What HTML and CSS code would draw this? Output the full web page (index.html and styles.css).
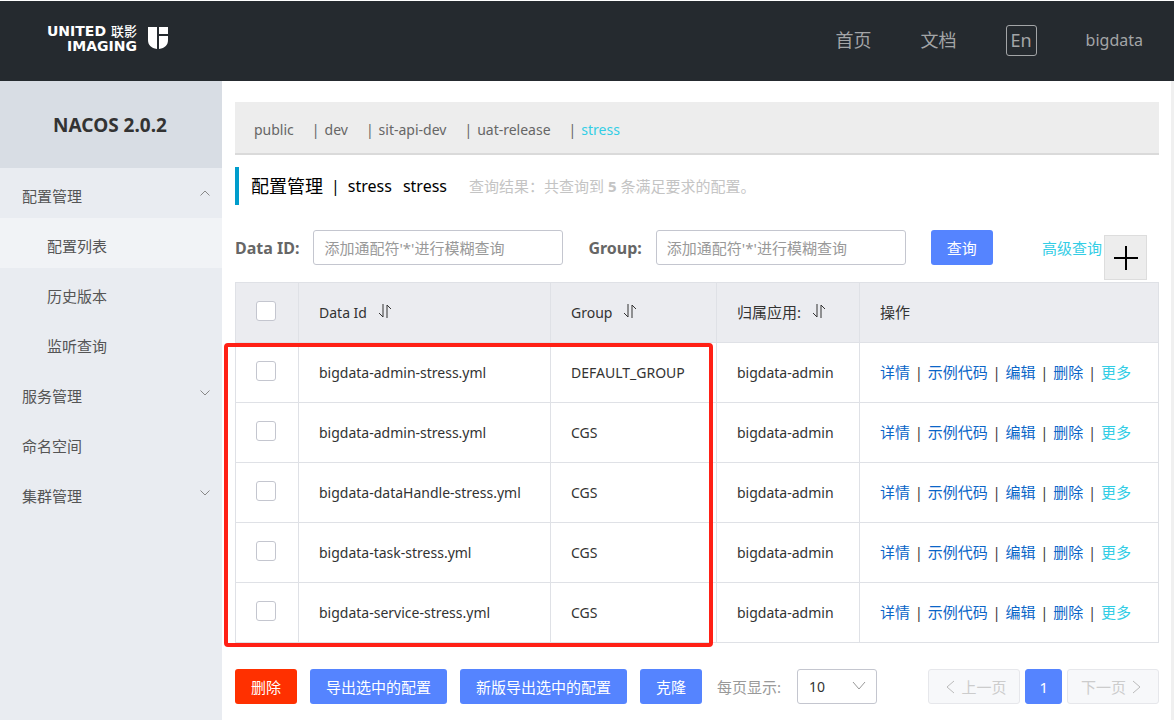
FILE: index.html
```html
<!DOCTYPE html>
<html lang="zh-CN">
<head>
<meta charset="utf-8">
<title>NACOS</title>
<link rel="stylesheet" href="styles.css">
</head>
<body>
<header class="topbar">
  <a class="logo" href="#">
    <span class="logo-text">
      <span class="logo-line">UNITED <span class="logo-cn">联影</span></span>
      <span class="logo-line">IMAGING</span>
    </span>
    <svg class="logo-mark" viewBox="0 0 20 22" aria-hidden="true"><path d="M0 0h9v22C3 21 0 18 0 13zM11 0h9v7h-9zM11 9h9v4c0 5-3 8-9 9z" fill="#fff"/></svg>
  </a>
  <nav class="topnav">
    <a href="#">首页</a>
    <a href="#">文档</a>
    <button class="lang" type="button">En</button>
    <a class="user" href="#">bigdata</a>
  </nav>
</header>
<div class="layout">
  <aside class="sidebar">
    <h1 class="product">NACOS 2.0.2</h1>
    <nav class="menu">
      <a class="item" href="#">配置管理<svg class="chev" viewBox="0 0 10 6"><path d="M0.5 5.5 5 1l4.500 4.500"/></svg></a>
      <a class="item sub active" href="#">配置列表</a>
      <a class="item sub" href="#">历史版本</a>
      <a class="item sub" href="#">监听查询</a>
      <a class="item" href="#">服务管理<svg class="chev" viewBox="0 0 10 6"><path d="M0.5 0.500 5 5l4.500-4.500"/></svg></a>
      <a class="item" href="#">命名空间</a>
      <a class="item" href="#">集群管理<svg class="chev" viewBox="0 0 10 6"><path d="M0.5 0.500 5 5l4.500-4.500"/></svg></a>
    </nav>
  </aside>
  <main class="main">
    <nav class="namespaces">
      <a href="#">public</a><span class="bar">|</span><a href="#">dev</a><span class="bar">|</span><a href="#">sit-api-dev</a><span class="bar">|</span><a href="#">uat-release</a><span class="bar">|</span><a class="current" href="#">stress</a>
    </nav>
    <div class="heading">
      <h2 class="title">配置管理</h2><span class="title-bar">|</span><span class="ns">stress</span><span class="ns">stress</span>
      <span class="result">查询结果：共查询到 <b>5</b> 条满足要求的配置。</span>
    </div>
    <form class="search">
      <label for="dataid">Data ID:</label>
      <input class="field" id="dataid" type="text" placeholder="添加通配符'*'进行模糊查询">
      <label class="group-label" for="group">Group:</label>
      <input class="field" id="group" type="text" placeholder="添加通配符'*'进行模糊查询">
      <button class="btn query" type="button">查询</button>
      <a class="advanced" href="#">高级查询</a>
      <button class="add" type="button" aria-label="新建配置"><svg viewBox="0 0 26 26"><path d="M1 13h24M13 1v24"/></svg></button>
    </form>
    <div class="table-wrap">
      <table class="configs">
        <colgroup><col class="c-check"><col class="c-id"><col class="c-group"><col class="c-app"><col></colgroup>
        <thead>
          <tr>
            <th><input type="checkbox" aria-label="全选"></th>
            <th>Data Id<svg class="sort" viewBox="0 0 14 16"><path d="M5 1v13L1 10M9 15V2l4 4"/></svg></th>
            <th>Group<svg class="sort" viewBox="0 0 14 16"><path d="M5 1v13L1 10M9 15V2l4 4"/></svg></th>
            <th><span class="cn">归属应用:</span><svg class="sort" viewBox="0 0 14 16"><path d="M5 1v13L1 10M9 15V2l4 4"/></svg></th>
            <th><span class="cn">操作</span></th>
          </tr>
        </thead>
        <tbody>
          <tr><td><input type="checkbox" aria-label="选择"></td><td>bigdata-admin-stress.yml</td><td>DEFAULT_GROUP</td><td>bigdata-admin</td><td class="ops"><a href="#">详情</a><i>|</i><a href="#">示例代码</a><i>|</i><a href="#">编辑</a><i>|</i><a href="#">删除</a><i>|</i><a class="more" href="#">更多</a></td></tr>
          <tr><td><input type="checkbox" aria-label="选择"></td><td>bigdata-admin-stress.yml</td><td>CGS</td><td>bigdata-admin</td><td class="ops"><a href="#">详情</a><i>|</i><a href="#">示例代码</a><i>|</i><a href="#">编辑</a><i>|</i><a href="#">删除</a><i>|</i><a class="more" href="#">更多</a></td></tr>
          <tr><td><input type="checkbox" aria-label="选择"></td><td>bigdata-dataHandle-stress.yml</td><td>CGS</td><td>bigdata-admin</td><td class="ops"><a href="#">详情</a><i>|</i><a href="#">示例代码</a><i>|</i><a href="#">编辑</a><i>|</i><a href="#">删除</a><i>|</i><a class="more" href="#">更多</a></td></tr>
          <tr><td><input type="checkbox" aria-label="选择"></td><td>bigdata-task-stress.yml</td><td>CGS</td><td>bigdata-admin</td><td class="ops"><a href="#">详情</a><i>|</i><a href="#">示例代码</a><i>|</i><a href="#">编辑</a><i>|</i><a href="#">删除</a><i>|</i><a class="more" href="#">更多</a></td></tr>
          <tr><td><input type="checkbox" aria-label="选择"></td><td>bigdata-service-stress.yml</td><td>CGS</td><td>bigdata-admin</td><td class="ops"><a href="#">详情</a><i>|</i><a href="#">示例代码</a><i>|</i><a href="#">编辑</a><i>|</i><a href="#">删除</a><i>|</i><a class="more" href="#">更多</a></td></tr>
        </tbody>
      </table>
      <div class="highlight"></div>
    </div>
    <div class="footer">
      <div class="actions">
        <button class="btn danger" type="button">删除</button>
        <button class="btn" type="button">导出选中的配置</button>
        <button class="btn" type="button">新版导出选中的配置</button>
        <button class="btn" type="button">克隆</button>
      </div>
      <label class="per-page" for="size">每页显示:</label>
      <span class="select">
        <select id="size"><option>10</option><option>20</option></select>
        <svg viewBox="0 0 14 10"><path d="M1 1l6 7 6-7"/></svg>
      </span>
      <div class="pager">
        <button class="page prev" type="button" disabled><svg viewBox="0 0 10 14"><path d="M9 1 2 7l7 6"/></svg>上一页</button>
        <button class="page now" type="button">1</button>
        <button class="page next" type="button" disabled>下一页<svg viewBox="0 0 10 14"><path d="M1 1l7 6-7 6"/></svg></button>
      </div>
    </div>
  </main>
</div>
</body>
</html>
```
FILE: styles.css
```css
* { box-sizing: border-box; }
body {
  margin: 0;
  min-height: 100vh;
  display: flex;
  flex-direction: column;
  border-top: 1px solid #fff;
  background: #fff;
  color: #333;
  font: 14px/20px "Noto Sans", "Noto Sans CJK SC", sans-serif;
}
a { color: inherit; text-decoration: none; }
button, input, select { font: inherit; margin: 0; }
svg { fill: none; }

.topbar {
  display: flex;
  justify-content: space-between;
  align-items: center;
  height: 80px;
  padding: 0 31px 0 47px;
  background: #252a2f;
}
.logo { display: flex; align-items: center; gap: 11px; padding-bottom: 6px; color: #fff; }
.logo-text { text-align: right; font: bold 14px/14px "DejaVu Sans", "Noto Sans CJK SC", sans-serif; }
.logo-line { display: block; white-space: nowrap; }
.logo-cn { font-size: 13px; font-weight: 500; }
.logo-mark { width: 20px; height: 22px; }
.topnav { display: flex; align-items: center; gap: 49px; padding-bottom: 2px; color: #a3a5a7; font-size: 18px; }
.lang {
  width: 31px;
  height: 31px;
  padding: 0;
  border: 1px solid #a3a5a7;
  border-radius: 3px;
  background: none;
  color: inherit;
  line-height: 24px;
}
.user { font-size: 16px; }

.layout { flex: 1; display: flex; }
.sidebar { width: 222px; flex: none; background: #e9ecf1; }
.product {
  margin: 0;
  height: 87px;
  background: #d8dde4;
  font-size: 19px;
  line-height: 88px;
  text-align: center;
  padding-right: 2px;
}
.item {
  display: flex;
  justify-content: space-between;
  align-items: center;
  height: 50px;
  padding: 6px 12px 0 22px;
  font-size: 15px;
  color: #555;
}
.sub { padding-left: 47px; }
.active { background: #f1f3f6; }
.chev { width: 10px; height: 6px; margin-bottom: 6px; stroke: #888; }

.main {
  flex: 1;
  min-width: 0;
  padding: 21px 12px 15px 13px;
  border-right: 3px solid #f0f0f0;
}
.namespaces {
  display: flex;
  height: 53px;
  padding: 18px 19px 0;
  border-bottom: 2px solid #dadada;
  background: #ededed;
  color: #666;
}
.bar { margin: 0 5px 0 18px; }
.current { color: #33cde5; }
.heading {
  display: flex;
  align-items: center;
  height: 38px;
  margin-top: 12px;
  padding-left: 12px;
  border-left: 4px solid #009dcc;
  color: #000;
  font-size: 16px;
}
.title { margin: 0; font-size: 18px; font-weight: 400; }
.title-bar { margin: 0 8px; }
.ns { margin-right: 11px; }
.result { margin-left: 11px; color: #c4c4c4; font-size: 15px; }

.search { position: relative; display: flex; align-items: center; margin-top: 25px; color: #666; }
.search label { font-size: 16px; font-weight: 700; margin-right: 14px; }
.search .group-label { margin-left: 25px; }
.field {
  width: 250px;
  height: 35px;
  padding: 0 10px;
  border: 1px solid #c4c6cf;
  border-radius: 3px;
  font-size: 15px;
}
.field::placeholder { color: #999; }
.btn {
  height: 35px;
  padding: 0 16px;
  border: 0;
  border-radius: 3px;
  background: #5584ff;
  color: #fff;
  font-size: 15px;
  white-space: nowrap;
}
.query { margin-left: 25px; }
.advanced { margin-left: 49px; color: #33cde5; font-size: 15px; white-space: nowrap; }
.add {
  position: absolute;
  top: 5px;
  right: 12px;
  width: 43px;
  height: 45px;
  padding: 8px 8px;
  border: 1px solid #ddd;
  background: #ededed;
}
.add svg { display: block; width: 26px; height: 26px; stroke: #000; stroke-width: 2; }

.table-wrap { position: relative; margin-top: 17px; }
.configs { width: 100%; border-collapse: collapse; table-layout: fixed; }
.c-check { width: 63px; }
.c-id { width: 252px; }
.c-group { width: 166px; }
.c-app { width: 143px; }
.configs th, .configs td {
  height: 60px;
  padding: 0 20px;
  border: 1px solid #dfe1e6;
  font-weight: 400;
  text-align: left;
  white-space: nowrap;
}
.configs th { background: #ebecf0; }
.cn { font-size: 15px; }
.configs input {
  display: block;
  appearance: none;
  width: 20px;
  height: 20px;
  margin-bottom: 4px;
  border: 1px solid #c4c6cf;
  border-radius: 3px;
  background: #fff;
}
.sort { width: 14px; height: 16px; margin-left: 11px; vertical-align: -1px; stroke: #333; }
.ops a { color: #0b66c8; font-size: 15px; }
.ops i { margin: 0 5px; font-style: normal; }
.ops .more { color: #33cde5; }
.highlight {
  position: absolute;
  top: 61px;
  left: -11px;
  width: 489px;
  height: 304px;
  border: 4px solid #ff2015;
  border-radius: 4px;
  pointer-events: none;
}

.footer { display: flex; align-items: center; margin-top: 26px; }
.actions { display: flex; gap: 13px; }
.danger { background: #ff3000; }
.per-page { margin: 0 16px 0 15px; color: #999; font-size: 15px; }
.select { position: relative; }
.select select {
  display: block;
  appearance: none;
  width: 80px;
  height: 35px;
  padding: 0 11px;
  border: 1px solid #c4c6cf;
  border-radius: 3px;
  background: #fff;
  color: #333;
}
.select svg { position: absolute; top: 12px; right: 11px; width: 14px; height: 10px; stroke: #999; }
.pager { display: flex; gap: 5px; margin-left: auto; }
.page {
  display: flex;
  align-items: center;
  gap: 6px;
  height: 35px;
  padding: 0 13px;
  border: 1px solid #e6e7eb;
  border-radius: 3px;
  background: #f7f8fa;
  color: #ccc;
  font-size: 15px;
}
.page svg { width: 10px; height: 14px; stroke: #bbb; }
.prev { padding-left: 16px; }
.next { padding-right: 16px; }
.now { border-color: #5584ff; background: #5584ff; color: #fff; }
```
